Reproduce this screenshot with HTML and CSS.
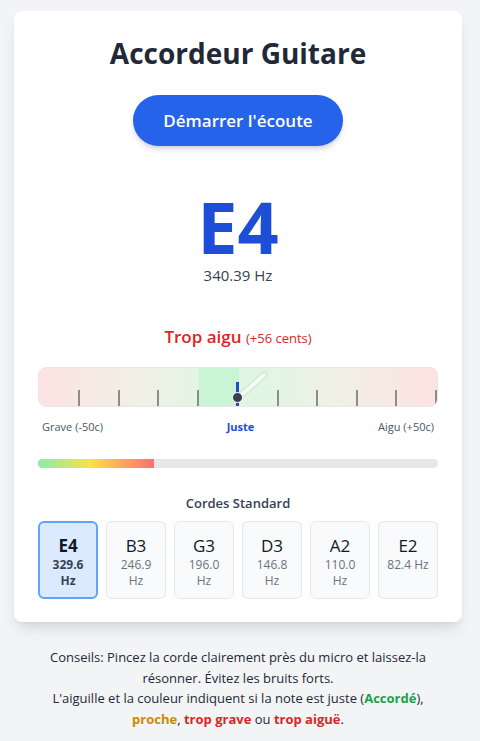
FILE: index.html
```html
<!DOCTYPE html>
<html lang="fr">
<head>
<meta charset="utf-8">
<title>Accordeur Guitare</title>
<link rel="stylesheet" href="styles.css">
</head>
<body>
<main class="card">
  <h1 class="title">Accordeur Guitare</h1>
  <button class="start">Démarrer l'écoute</button>
  <div class="note">E4</div>
  <div class="freq">340.39 Hz</div>
  <div class="status">Trop aigu <span class="cents">(+56 cents)</span></div>
  <div class="meter">
    <div class="zone"></div>
    <div class="ticks">
      <span class="tick"></span><span class="tick"></span><span class="tick"></span><span class="tick"></span>
      <span class="tick center"></span>
      <span class="tick"></span><span class="tick"></span><span class="tick"></span><span class="tick"></span><span class="tick"></span>
    </div>
    <svg class="needle" width="44" height="40" viewBox="0 0 44 40">
      <line x1="6" y1="30" x2="32" y2="7" stroke="#d3e8d8" stroke-width="7" stroke-linecap="round"/>
      <line x1="6" y1="30" x2="32" y2="7" stroke="#f4fbf5" stroke-width="4" stroke-linecap="round"/>
    </svg>
    <span class="pivot"></span>
  </div>
  <div class="labels">
    <span>Grave (-50c)</span>
    <span class="juste">Juste</span>
    <span>Aigu (+50c)</span>
  </div>
  <div class="level"><div class="level-fill" style="width:29%"></div></div>
  <h2 class="strings-title">Cordes Standard</h2>
  <div class="strings">
    <div class="string active"><span class="s-note">E4</span><span class="s-freq">329.6 Hz</span></div>
    <div class="string"><span class="s-note">B3</span><span class="s-freq">246.9 Hz</span></div>
    <div class="string"><span class="s-note">G3</span><span class="s-freq">196.0 Hz</span></div>
    <div class="string"><span class="s-note">D3</span><span class="s-freq">146.8 Hz</span></div>
    <div class="string"><span class="s-note">A2</span><span class="s-freq">110.0 Hz</span></div>
    <div class="string"><span class="s-note">E2</span><span class="s-freq">82.4 Hz</span></div>
  </div>
</main>
<p class="tips">Conseils: Pincez la corde clairement près du micro et laissez-la résonner. Évitez les bruits forts.<br>L'aiguille et la couleur indiquent si la note est juste (<b class="ok">Accordé</b>), <b class="near">proche</b>, <b class="bad">trop grave</b> ou <b class="bad">trop aiguë</b>.</p>
</body>
</html>
```
FILE: styles.css
```css
* { box-sizing: border-box; }
html, body { margin: 0; padding: 0; }
body {
  background: #f3f4f6;
  font-family: "Open Sans", "Noto Sans", sans-serif;
  color: #1f2937;
  padding: 11px 0 0 14px;
}
.card {
  width: 448px;
  background: #ffffff;
  border-radius: 8px;
  box-shadow: 0 10px 15px -3px rgba(0,0,0,0.1), 0 4px 6px -4px rgba(0,0,0,0.1);
  padding: 24px 24px 23px;
  display: flex;
  flex-direction: column;
  align-items: center;
}
.title {
  margin: 0;
  font-size: 28px;
  line-height: 36px;
  font-weight: 700;
  color: #1f2937;
}
.start {
  margin-top: 24px;
  width: 210px;
  height: 51px;
  border: none;
  border-radius: 999px;
  background: #2563eb;
  color: #fff;
  font-family: inherit;
  font-size: 17px;
  font-weight: 600;
  box-shadow: 0 4px 6px -1px rgba(0,0,0,0.15), 0 2px 4px -2px rgba(0,0,0,0.1);
}
.note {
  margin-top: 44px;
  font-size: 72px;
  line-height: 72px;
  font-weight: 700;
  color: #1d4ed8;
}
.freq {
  margin-top: 2px;
  font-size: 15px;
  line-height: 22px;
  color: #374151;
}
.status {
  margin-top: 39px;
  font-size: 17px;
  line-height: 24px;
  font-weight: 600;
  color: #dc2626;
}
.cents { font-size: 13px; font-weight: 400; }
.meter {
  position: relative;
  margin-top: 17px;
  width: 400px;
  height: 40px;
  border: 1px solid #e5e7eb;
  border-radius: 8px;
  overflow: hidden;
  background: linear-gradient(90deg, #fde2e2 0%, #f0f0e4 25%, #e2f5e3 42%, #e2f5e3 58%, #f0f0e4 75%, #fde2e2 100%);
}
.zone {
  position: absolute;
  left: 160px;
  top: 0;
  width: 40px;
  height: 100%;
  background: #c9f5d4;
}
.ticks {
  position: absolute;
  inset: 0;
  display: flex;
  justify-content: space-between;
  align-items: flex-end;
  padding-left: 39px;
}
.tick {
  width: 2px;
  height: 16px;
  background: #8c8c8c;
}
.tick.center {
  width: 3px;
  height: 24px;
  background: #1d4ed8;
}
.needle {
  position: absolute;
  left: 193px;
  top: 0;
}
.pivot {
  position: absolute;
  left: 193px;
  top: 24px;
  width: 11px;
  height: 11px;
  border-radius: 50%;
  background: #374151;
  border: 1.5px solid #fff;
}
.labels {
  margin-top: 12px;
  width: 400px;
  display: flex;
  justify-content: space-between;
  padding: 0 4px;
  font-size: 11px;
  line-height: 16px;
  color: #4b5563;
}
.juste { font-weight: 700; color: #1d4ed8; }
.level {
  margin-top: 24px;
  width: 400px;
  height: 9px;
  border-radius: 999px;
  background: #e5e7eb;
  overflow: hidden;
}
.level-fill {
  height: 100%;
  background: linear-gradient(90deg, #86efac 0%, #fde047 45%, #f87171 100%);
}
.strings-title {
  margin: 25px 0 0;
  font-size: 13px;
  line-height: 20px;
  font-weight: 600;
  color: #374151;
}
.strings {
  margin-top: 8px;
  width: 400px;
  display: grid;
  grid-template-columns: repeat(6, 1fr);
  gap: 8px;
}
.string {
  height: 78px;
  border: 1px solid #e5e7eb;
  border-radius: 6px;
  background: #f9fafb;
  display: flex;
  flex-direction: column;
  align-items: center;
  justify-content: flex-start;
  padding: 13px 7px 0;
  text-align: center;
}
.string.active {
  border: 2px solid #60a5fa;
  background: #dbeafe;
  padding: 12px 6px 0;
}
.s-note {
  font-size: 17px;
  line-height: 22px;
  color: #111827;
}
.s-freq {
  font-size: 12px;
  line-height: 16px;
  color: #6b7280;
}
.active .s-note { font-weight: 700; }
.active .s-freq { font-weight: 700; color: #374151; }
.tips {
  width: 448px;
  margin: 25px 0 0;
  padding: 0 30px;
  text-align: center;
  font-size: 13px;
  line-height: 20.5px;
  color: #1f2937;
}
.ok { color: #16a34a; }
.near { color: #ca8a04; }
.bad { color: #dc2626; }
```
